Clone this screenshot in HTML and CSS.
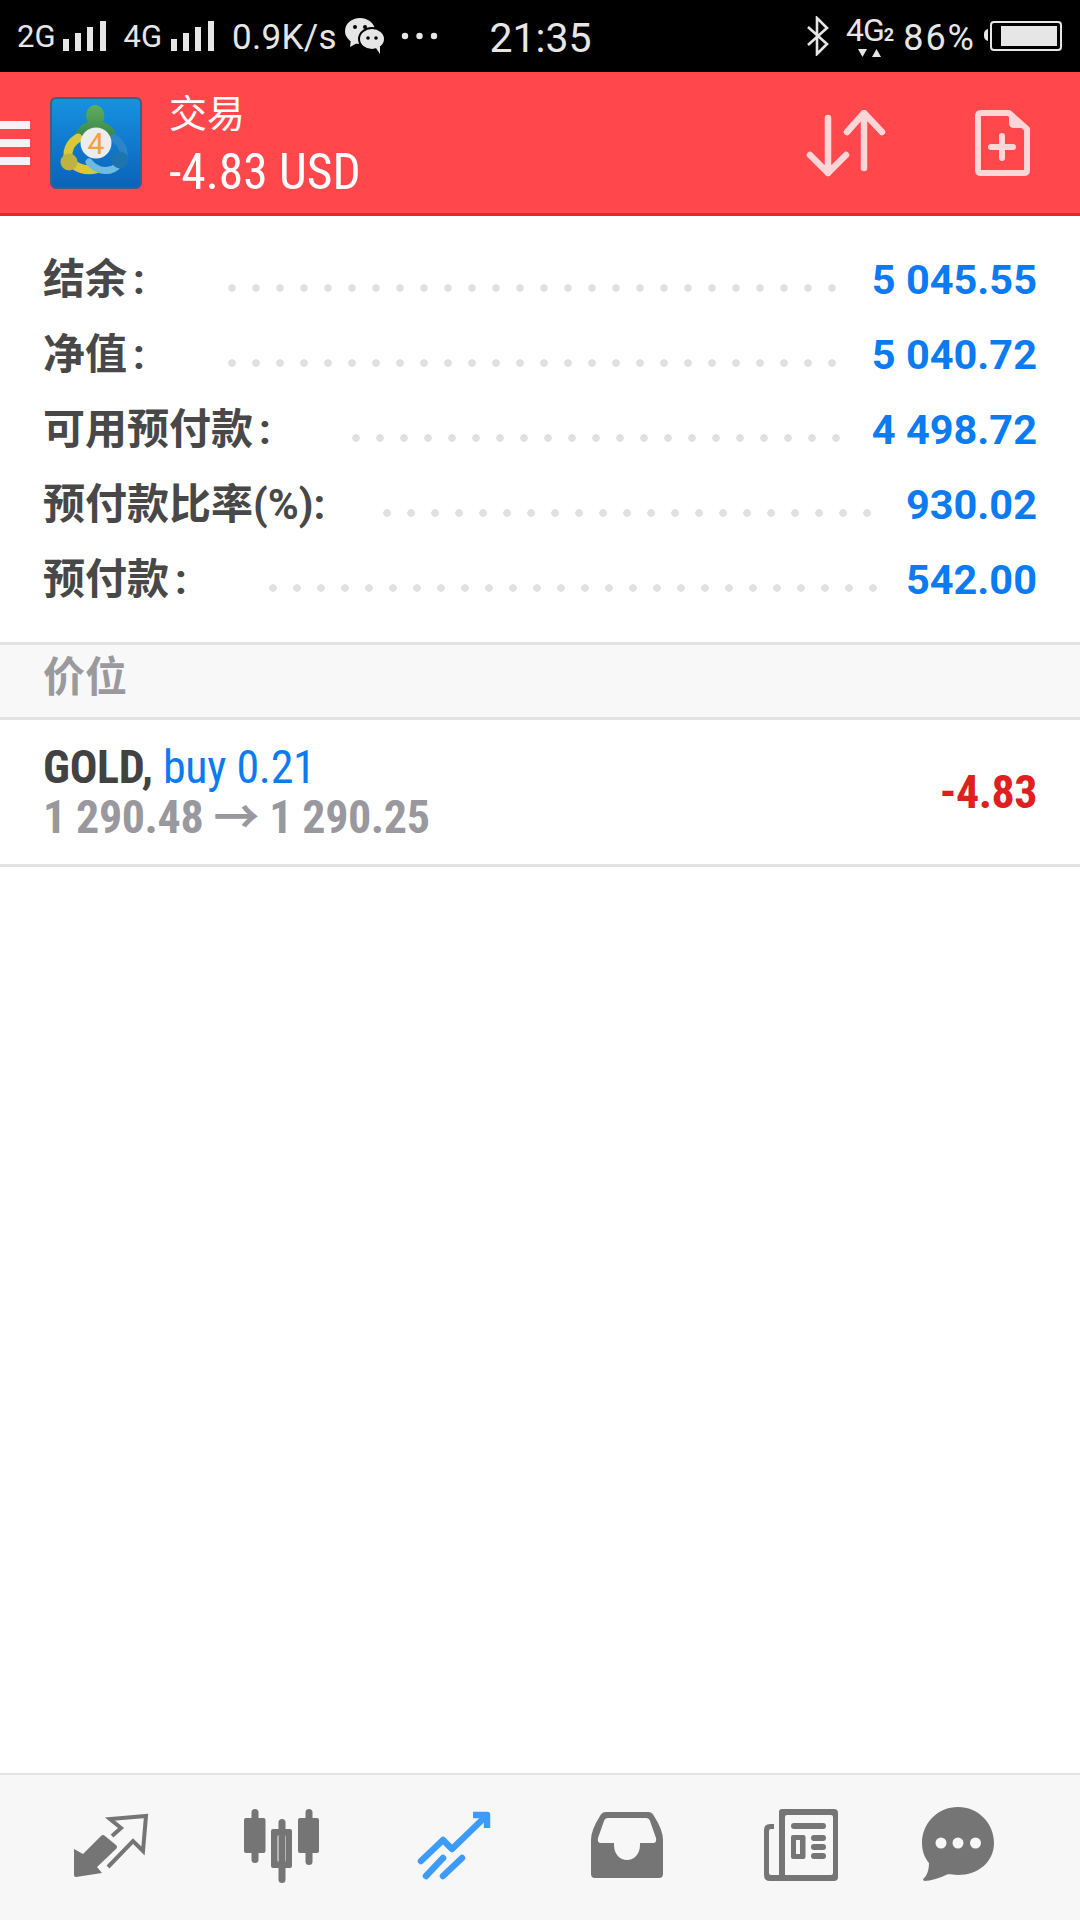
FILE: index.html
```html
<!DOCTYPE html>
<html lang="zh-CN">
<head>
    <meta charset="UTF-8">
    <meta name="viewport" content="width=device-width, initial-scale=1.0">
    <title>交易</title>
    <link rel="stylesheet" href="styles.css">
</head>
<body>
    <div class="status-bar">
        <div class="status-left">
            <span class="net">2G</span>
            <svg class="signal" width="44" height="30" viewBox="0 0 44 30"><rect x="0" y="18" width="6" height="12"/><rect x="12" y="12" width="6" height="18"/><rect x="24" y="6" width="6" height="24"/><rect x="37" y="0" width="6" height="30"/></svg>
            <span class="net net-second">4G</span>
            <svg class="signal" width="44" height="30" viewBox="0 0 44 30"><rect x="0" y="18" width="6" height="12"/><rect x="12" y="12" width="6" height="18"/><rect x="24" y="6" width="6" height="24"/><rect x="37" y="0" width="6" height="30"/></svg>
            <span class="speed">0.9K/s</span>
            <svg class="wechat" width="40" height="36" viewBox="0 0 40 36">
                <ellipse cx="15" cy="13" rx="15" ry="13" fill="#e6e6e6"/>
                <path d="M6 21 L5 29 L14 24 Z" fill="#e6e6e6"/>
                <ellipse cx="27" cy="21" rx="13" ry="11" fill="#e6e6e6" stroke="#000" stroke-width="2"/>
                <path d="M31 30 L35 36 L35 28 Z" fill="#e6e6e6"/>
                <circle cx="10" cy="9" r="2" fill="#000"/><circle cx="20" cy="9" r="2" fill="#000"/>
                <circle cx="23" cy="20" r="1.8" fill="#000"/><circle cx="31" cy="20" r="1.8" fill="#000"/>
            </svg>
            <svg class="more" width="37" height="8" viewBox="0 0 37 8"><circle cx="4" cy="4" r="3.2"/><circle cx="18.5" cy="4" r="3.2"/><circle cx="33" cy="4" r="3.2"/></svg>
        </div>
        <div class="status-time">21:35</div>
        <div class="status-right">
            <svg class="bt" width="24" height="40" viewBox="0 0 24 40"><path d="M2 11 L21 28 L11 38 V2 L21 12 L2 29" fill="none" stroke="#e6e6e6" stroke-width="2.6"/></svg>
            <div class="net-four">
                <div class="net-four-text">4G<span class="sub">2</span></div>
                <svg class="net-four-arrows" width="24" height="9" viewBox="0 0 24 9"><path d="M0 1 H9 L4.5 9 Z M14 9 H23 L18.500 1 Z" fill="#e6e6e6"/></svg>
            </div>
            <span class="batt-text">86%</span>
            <svg class="battery" width="78" height="30" viewBox="0 0 78 30">
                <path d="M0 13 Q0 9 4 8 V20 Q0 19 0 15 Z" fill="#e6e6e6"/>
                <rect x="7" y="1" width="70" height="28" rx="3" fill="none" stroke="#e6e6e6" stroke-width="2"/>
                <rect x="17" y="5" width="56" height="20" fill="#e6e6e6"/>
            </svg>
        </div>
    </div>

    <div class="top-bar">
        <div class="menu-icon"><span></span><span></span><span></span></div>
        <svg class="logo" width="92" height="92" viewBox="0 0 92 92">
            <defs>
                <linearGradient id="logoBg" x1="0" y1="0" x2="0" y2="1"><stop offset="0" stop-color="#1792e2"/><stop offset="1" stop-color="#0a62b8"/></linearGradient>
                <linearGradient id="logoGreen" x1="0" y1="0" x2="0" y2="1"><stop offset="0" stop-color="#62ad5e"/><stop offset="1" stop-color="#2a7a42"/></linearGradient>
            </defs>
            <rect x="1" y="1" width="90" height="90" rx="5" fill="url(#logoBg)" stroke="#3f5f86" stroke-width="2"/>
            <path d="M25 50 C22 37 29 28 38 25 C33 17 39 8 45 8 C52 8 57 17 53 25 C62 28 69 36 67 48 C60 34 32 34 25 50 Z" fill="url(#logoGreen)"/>
            <g fill="none" stroke-linecap="round">
                <path d="M28 41 C17 48 14 62 24 68 C30 72 38 74 46 72" stroke="#d8c83c" stroke-width="9"/>
                <path d="M64 41 C74 48 76 58 71 64" stroke="#2a86c8" stroke-width="8"/>
                <path d="M69 67 C62 76 48 76 39 65" stroke="#6fb9e6" stroke-width="7"/>
            </g>
            <circle cx="70" cy="63" r="8.500" fill="#1d74ae"/>
            <circle cx="19" cy="65" r="8.500" fill="#bdb33e"/>
            <circle cx="46" cy="46" r="15.500" fill="#ececec"/>
            <text class="logo-four" x="46" y="57" text-anchor="middle">4</text>
        </svg>
        <div class="titles">
            <div class="title">交易</div>
            <div class="subtitle"><span class="cond">-4.83 USD</span></div>
        </div>
        <div class="actions">
            <svg class="swap" width="80" height="70" viewBox="0 0 80 70">
                <path d="M22 8 V63 M4 45 L22 63 L40 45 M58 3 V58 M41 22 L58 3 L76 22" fill="none" stroke="#ffd6d8" stroke-width="6.500" stroke-linecap="round" stroke-linejoin="round"/>
            </svg>
            <svg class="new-doc" width="60" height="70" viewBox="0 0 60 70">
                <path d="M9 5 H37 L55 21 V62 Q55 65 52 65 H9 Q6 65 6 62 V8 Q6 5 9 5 Z" fill="none" stroke="#ffd6d8" stroke-width="6" stroke-linejoin="round"/>
                <path d="M37 4 L56 20 L42 20 Q37 20 37 15 Z" fill="#ffd6d8"/>
                <path d="M30 28 V50 M19 39 H41" fill="none" stroke="#ffd6d8" stroke-width="6" stroke-linecap="round"/>
            </svg>
        </div>
    </div>

    <div class="summary">
        <div class="summary-row"><span class="label">结余<span class="colon">:</span></span><span class="dots dots-a"></span><span class="value">5 045.55</span></div>
        <div class="summary-row"><span class="label">净值<span class="colon">:</span></span><span class="dots dots-a"></span><span class="value">5 040.72</span></div>
        <div class="summary-row"><span class="label">可用预付款<span class="colon">:</span></span><span class="dots dots-b"></span><span class="value">4 498.72</span></div>
        <div class="summary-row"><span class="label">预付款比率(%):</span><span class="dots dots-c"></span><span class="value">930.02</span></div>
        <div class="summary-row"><span class="label">预付款<span class="colon">:</span></span><span class="dots dots-d"></span><span class="value">542.00</span></div>
    </div>

    <div class="section-head">价位</div>

    <div class="position">
        <div class="position-info">
            <div class="position-name cond"><b>GOLD,</b> <span class="side">buy 0.21</span></div>
            <div class="position-price cond">1 290.48 → 1 290.25</div>
        </div>
        <div class="position-profit"><span class="cond">-4.83</span></div>
    </div>

    <div class="spacer"></div>

    <div class="tab-bar">
        <div class="tab">
            <svg width="100" height="100" viewBox="0 0 100 100">
                <path d="M14 51 L23 56 L41 38 Q43 36 45 38 L56 47 Q58 49 56 51 L37 69 L42 75 L16 79 Q14 79 14 77 Z" fill="#757575"/>
                <path d="M52 38 L61 30 L50 21 L86 18 L83 53 L73 43 L48 69" fill="none" stroke="#757575" stroke-width="4"/>
            </svg>
        </div>
        <div class="tab">
            <svg width="100" height="100" viewBox="1 0 100 100" fill="#757575">
                <rect x="20.500" y="11" width="7" height="54" rx="3.500"/>
                <rect x="13" y="20" width="21.500" height="35" rx="2"/>
                <rect x="47.500" y="21" width="7" height="64" rx="3.500"/>
                <path fill-rule="evenodd" d="M42 31 H59 Q61 31 61 33 V68 Q61 70 59 70 H42 Q40 70 40 68 V33 Q40 31 42 31 Z M48 37 Q46.500 37 46.500 39 V62 Q46.500 64 48 64 H53.500 Q55 64 55 62 V39 Q55 37 53.500 37 Z"/>
                <rect x="74.500" y="11" width="7" height="56" rx="3.500"/>
                <rect x="67" y="20" width="21" height="35" rx="2"/>
            </svg>
        </div>
        <div class="tab">
            <svg width="100" height="100" viewBox="0 0 100 100" fill="none" stroke="#3d9bfb" stroke-width="6.500" stroke-linecap="round" stroke-linejoin="round">
                <path d="M17 63 L39 42 L48 51 L79 21"/>
                <path d="M69 17 H83 V30" stroke-linecap="butt"/>
                <path d="M22 78 L39 60 M39 78 L58 60"/>
            </svg>
        </div>
        <div class="tab">
            <svg width="100" height="100" viewBox="-1 0 100 100">
                <path fill="#757575" fill-rule="evenodd" d="M29 14 H71 Q75 14 77 18 Q86 32 86 42 V76 Q86 80 82 80 H18 Q14 80 14 76 V42 Q14 32 23 18 Q25 14 29 14 Z M31 20 Q28 20 27 23 L21 40 Q20 45 24 45 H37 V47 C37 56 43 62 50 62 C57 62 63 56 63 47 V45 H76 Q80 45 79 40 L73 23 Q72 20 69 20 Z"/>
            </svg>
        </div>
        <div class="tab">
            <svg width="100" height="100" viewBox="-2 0 100 100" fill="#757575">
                <path fill-rule="evenodd" d="M32 11 H84 Q88 11 88 15 V79 Q88 83 84 83 H20 Q14 83 14 77 V32 Q14 26 20 26 H24 V31 H21 Q19 31 19 33 V75 Q19 77 21 77 H29 V14 Q29 11 32 11 Z M37 17 Q35 17 35 19 V77 H81 Q83 77 83 75 V19 Q83 17 81 17 Z"/>
                <rect x="41" y="25" width="35" height="6" rx="3"/>
                <path fill-rule="evenodd" d="M43 37 H53.500 Q55.500 37 55.500 39 V59 Q55.500 61 53.500 61 H43 Q41 61 41 59 V39 Q41 37 43 37 Z M46 42 V56 H50 V42 Z"/>
                <rect x="61" y="37" width="15" height="6" rx="3"/>
                <rect x="61" y="46" width="15" height="6" rx="3"/>
                <rect x="61" y="55" width="15" height="6" rx="3"/>
            </svg>
        </div>
        <div class="tab">
            <svg width="100" height="100" viewBox="0 0 100 100">
                <path fill="#757575" d="M38 9 C58 9 74 25 74 45 C74 64 58 77 38 77 C33 77 30 76 27 76.500 C20 80 11 83 4 83 L3 81 C7 78 9 72 9 65 C4 59 2 52 2 45 C2 25 18 9 38 9 Z"/>
                <circle cx="21" cy="45" r="5.500" fill="#f7f7f7"/>
                <circle cx="38" cy="45" r="5.500" fill="#f7f7f7"/>
                <circle cx="55.500" cy="45" r="5.500" fill="#f7f7f7"/>
            </svg>
        </div>
    </div>
</body>
</html>
```
FILE: styles.css
```css
* {
    box-sizing: border-box;
}

html, body {
    margin: 0;
    padding: 0;
}

body {
    width: 1080px;
    height: 1920px;
    display: flex;
    flex-direction: column;
    background: #fff;
    font-family: Roboto, "Noto Sans CJK SC", sans-serif;
    overflow: hidden;
}

.cond {
    font-stretch: 75%;
}

/* status bar */
.status-bar {
    height: 72px;
    background: #000;
    color: #e6e6e6;
    display: flex;
    align-items: center;
    padding: 0 18px 0 17px;
}

.status-left,
.status-right {
    flex: 1;
    display: flex;
    align-items: center;
}

.status-right {
    justify-content: flex-end;
}

.status-time {
    font-size: 41px;
    width: 100px;
    margin-top: 4px;
    text-align: center;
    white-space: nowrap;
}

.net {
    font-size: 31px;
}

.net-second {
    margin-left: 17px;
    margin-right: 2px;
}

.signal {
    fill: #e6e6e6;
    margin-left: 7px;
}

.speed {
    font-size: 35px;
    margin-left: 17px;
    margin-top: 2px;
    letter-spacing: 0.3px;
}

.wechat {
    margin-left: 8px;
}

.more {
    fill: #e6e6e6;
    margin-left: 16px;
}

.net-four {
    margin-left: 16px;
    display: flex;
    flex-direction: column;
    align-items: center;
    line-height: 1;
}

.net-four-text {
    font-size: 32px;
    letter-spacing: -1px;
    line-height: 30px;
}

.net-four-arrows {
    margin-top: -2px;
}

.sub {
    font-size: 18px;
    font-weight: 700;
}

.batt-text {
    font-size: 36px;
    margin-left: 10px;
    margin-top: 4px;
    letter-spacing: 2px;
}

.battery {
    margin-left: 8px;
}

/* red top bar */
.top-bar {
    height: 144px;
    background: #ff474c;
    border-bottom: 3px solid #e2282d;
    display: flex;
    align-items: center;
}

.menu-icon {
    width: 30px;
    display: flex;
    flex-direction: column;
    gap: 10px;
}

.menu-icon span {
    height: 8px;
    background: #f4f4f8;
}

.logo {
    margin-left: 20px;
}

.logo-four {
    font-size: 30px;
    fill: #f0a040;
}

.titles {
    margin-left: 27px;
    margin-top: 8px;
    color: #fff;
    display: flex;
    flex-direction: column;
}

.title {
    font-size: 38px;
    line-height: 50px;
}

.subtitle {
    font-size: 49.5px;
    line-height: 66px;
}

.actions {
    margin-left: auto;
    margin-right: 48px;
    display: flex;
    align-items: center;
    gap: 86px;
}

.swap {
    margin-top: 4px;
}

/* account summary */
.summary {
    padding: 26px 43px 25px;
    border-bottom: 3px solid #e3e3e3;
}

.summary-row {
    height: 75px;
    display: flex;
    align-items: center;
}

.label {
    font-size: 42px;
    font-weight: 700;
    color: #484848;
    white-space: nowrap;
    margin-bottom: 8px;
}

.colon {
    margin-left: 6px;
}

.dots {
    flex: 1;
    height: 8px;
    margin-top: 16px;
    background-image: radial-gradient(circle at 4px 4px, #e0e0e0 3.5px, transparent 4px);
    background-size: 24px 8px;
    background-repeat: repeat-x;
}

.dots-a {
    margin-left: 83px;
    margin-right: 30px;
}

.dots-b {
    margin-left: 81px;
    margin-right: 28px;
}

.dots-c {
    margin-left: 58px;
    margin-right: 31px;
}

.dots-d {
    margin-left: 82px;
    margin-right: 22px;
}

.value {
    font-size: 41.5px;
    font-weight: 700;
    color: #0a7bf0;
    white-space: nowrap;
}

/* positions */
.section-head {
    height: 75px;
    padding-left: 43px;
    font-size: 42px;
    line-height: 66px;
    font-weight: 700;
    color: #9a9a9e;
    background: #f8f8f9;
    border-bottom: 3px solid #e3e3e3;
}

.position {
    height: 147px;
    padding: 22px 43px 0;
    display: flex;
    justify-content: space-between;
    border-bottom: 3px solid #e3e3e3;
}

.position-name {
    font-size: 46px;
    line-height: 50px;
    letter-spacing: -0.3px;
    color: #0a7bf0;
}

.position-name b {
    color: #424242;
}

.position-price {
    font-size: 46px;
    line-height: 50px;
    letter-spacing: -0.4px;
    font-weight: 700;
    color: #98989e;
}

.position-profit {
    font-size: 46px;
    line-height: 100px;
    letter-spacing: -0.5px;
    font-weight: 700;
    color: #e02020;
}

.spacer {
    flex: 1;
}

/* bottom tabs */
.tab-bar {
    height: 147px;
    background: #f7f7f7;
    border-top: 2px solid #e3e3e3;
    padding: 23px 0 0 24px;
    display: flex;
}

.tab {
    width: 172px;
    display: flex;
    justify-content: center;
}
```
